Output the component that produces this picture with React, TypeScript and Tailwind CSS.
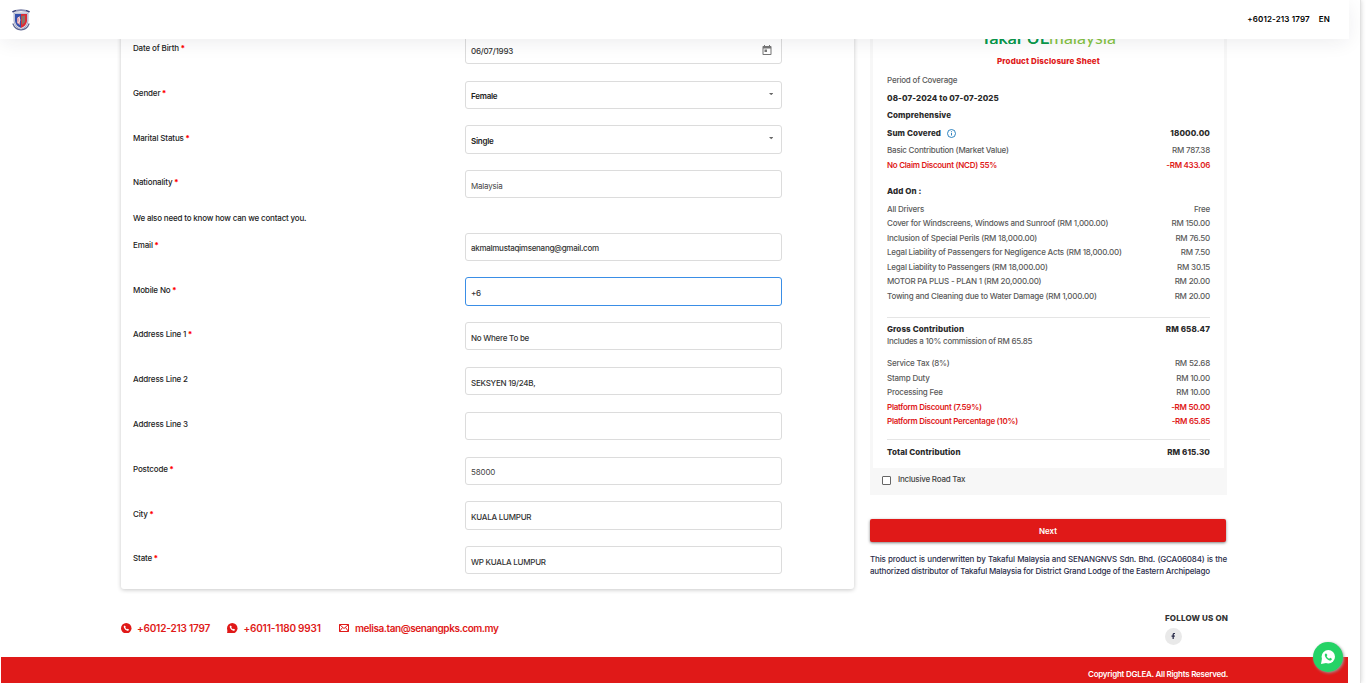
import React from "react";
import { FaFacebookF } from "react-icons/fa";

type FieldProps = { label: string; required?: boolean; value: string; tone?: string; border?: string; icon?: "date" | "select" };

function Field({ label, required, value, tone = "text-[#333] font-medium tracking-[-0.25px]", border = "border-[#dcdcdc]", icon }: FieldProps) {
  return (
    <div className="flex h-[44.8px] items-start">
      <div className="w-[332px] pt-[6.3px] text-[8px] leading-[12px] font-medium tracking-[-0.15px] text-[#222]">
        {label}
        {required && <span className="ml-[1.5px] font-extrabold text-[#f00]">*</span>}
      </div>
      <div className={`flex h-[28.2px] w-[317px] items-center justify-between rounded-[3px] border bg-white pl-[5px] pr-[8px] ${border}`}>
        <span className={`pt-[3px] text-[8px] leading-[12px] ${tone}`}>{value}</span>
        {icon === "date" && (
          <svg viewBox="0 0 24 24" className="size-[12px]" fill="#777">
            <path d="M19 4h-1V2h-2v2H8V2H6v2H5c-1.11 0-2 .9-2 2v14c0 1.1.89 2 2 2h14c1.1 0 2-.9 2-2V6c0-1.1-.9-2-2-2zm0 16H5V9h14v11zM7 11h5v5H7z" />
          </svg>
        )}
        {icon === "select" && (
          <svg viewBox="0 0 10 5" className="-mt-[2px] h-[2.2px] w-[4.4px]" fill="#666">
            <path d="M0 0h10L5 5z" />
          </svg>
        )}
      </div>
    </div>
  );
}

function Line({ l, r, h = "h-[14.5px]", tone = "font-medium tracking-[-0.21px] text-[#5a5a5a]" }: { l: string; r: string; h?: string; tone?: string }) {
  return (
    <div className={`flex items-center justify-between text-[8px] leading-[12px] ${h} ${tone}`}>
      <span>{l}</span>
      <span>{r}</span>
    </div>
  );
}

function Crest() {
  return (
    <svg viewBox="0 0 18 22" className="h-[22px] w-[18px]">
      <path d="M2 4V12Q2.5 18 9 20.5Q15.500 18 16 12V4Z" fill="#dfe1ee" stroke="#7a80a8" strokeWidth=".6" />
      <path d="M3 5H9V19Q3.500 17 3 12Z" fill="#3450ac" />
      <path d="M9 5H15V12Q14.500 17 9 19Z" fill="#dc2c36" />
      <path d="M5 9L8 7V16L5 14Z" fill="#e0a0aa" />
      <path d="M9.500 7L13 6.500L13 13L10 16Z" fill="#8c7468" />
      <path d="M6.500 8L8 11L6.500 14" stroke="#fff" strokeWidth=".8" fill="none" />
      <path d="M.5 3.200Q2 1.200 9 1.200Q16 1.200 17.500 3.200" stroke="#39417a" strokeWidth="1.600" fill="none" />
      <path d="M4 1.800H14" stroke="#c9cce0" strokeWidth=".8" fill="none" />
      <path d="M.8 14.500Q3 20.500 9 21Q15 20.500 17.200 14.500" stroke="#5a628f" strokeWidth="1.200" fill="none" />
    </svg>
  );
}

function WhatsBubble({ tail }: { tail?: boolean }) {
  return (
    <svg viewBox="0 0 24 24" className="size-[10.5px]">
      <circle cx="12" cy="12" r="12" fill="#e01918" />
      {tail && <path d="M0 24L1.500 14L10 23Z" fill="#e01918" />}
      <path d="M8.500 5.500L6.300 7.500C5.800 12.500 11.500 18.300 16.500 17.800L18.500 15.500L15.500 13L13.500 14.300C11.800 13.500 10.600 12.300 9.800 10.500L11 8.500Z" fill="#fff" />
    </svg>
  );
}

const strong = "font-extrabold tracking-[0.1px] text-[#2b2b2b]";
const discount = "font-semibold tracking-[-0.27px] text-[#e01918]";

export default function App() {
  return (
    <div className="flex h-[683px] w-[1366px] overflow-hidden bg-white font-['Inter',sans-serif]">
      <div className="flex w-[1361px] flex-col border-r border-[#e2e2e2] shadow-[0_0_5px_rgba(0,0,0,0.18)]">
        <header className="relative z-10 flex h-[39px] w-[1349px] shrink-0 items-center justify-between bg-white pl-[12px] pr-[19px] shadow-[0_4px_20px_-2px_rgba(30,30,50,0.09)]">
          <Crest />
          <div className="flex gap-[9px] pb-[2px] text-[8px] leading-[12px] font-semibold tracking-[0.14px] text-black">
            <span>+6012-213 1797</span>
            <span>EN</span>
          </div>
        </header>

        <main className="-mt-[10px] flex h-[586px] shrink-0 items-start pl-[121px]">
          <section className="h-[560px] w-[733px] rounded-[3px] bg-white pl-[12px] pt-[6.8px] shadow-[0_1px_4px_rgba(0,0,0,0.22)]">
            <Field label="Date of Birth" required value="06/07/1993" tone="font-medium tracking-[-0.2px] text-[#333]" icon="date" />
            <Field label="Gender" required value="Female" tone="font-semibold tracking-[-0.25px] text-[#222]" icon="select" />
            <Field label="Marital Status" required value="Single" tone="font-semibold tracking-[-0.25px] text-[#222]" icon="select" />
            <Field label="Nationality" required value="Malaysia" tone="font-normal tracking-[-0.2px] text-[#444]" />
            <p className="flex h-[17.6px] items-start text-[8px] leading-[12px] font-medium tracking-[-0.18px] text-[#222]">
              <span className="-mt-[2.5px]">We also need to know how can we contact you.</span>
            </p>
            <Field label="Email" required value="akmalmustaqimsenang@gmail.com" tone="font-medium tracking-[-0.28px] text-[#333]" />
            <Field label="Mobile No" required value="+6" border="border-[#3a8ee6]" />
            <Field label="Address Line 1" required value="No Where To be" />
            <Field label="Address Line 2" value="SEKSYEN 19/24B," />
            <Field label="Address Line 3" value="" />
            <Field label="Postcode" required value="58000" tone="font-normal tracking-[-0.15px] text-[#444]" />
            <Field label="City" required value="KUALA LUMPUR" />
            <Field label="State" required value="WP KUALA LUMPUR" />
          </section>

          <aside className="ml-[16px] w-[357px]">
            <div className="h-[466px] border-x-[3px] border-b-[27px] border-[#f7f7f7] bg-white px-[14px]">
              <div className="h-[26px] text-center font-['Lato',sans-serif] text-[18px] leading-[17px] text-[#0a9a4b]">
                <span className="[text-shadow:0_0_0.5px_#0a9a4b]">TakaFUL</span><span className="text-[#84c341]">malaysia</span>
              </div>
              <div className="h-[16px] text-center text-[8px] leading-[12px] font-extrabold tracking-[0.12px] text-[#e01918]">Product Disclosure Sheet</div>
              <div className="h-[18px] text-[8px] leading-[18px] font-medium tracking-[-0.2px] text-[#5a5a5a]">Period of Coverage</div>
              <div className={`h-[18px] text-[8px] leading-[18px] ${strong}`}>08-07-2024 to 07-07-2025</div>
              <div className={`h-[17px] text-[8px] leading-[17px] ${strong}`}>Comprehensive</div>
              <div className={`flex h-[18px] items-center justify-between text-[8px] ${strong}`}>
                <span className="flex items-center gap-[6px]">
                  Sum Covered
                  <svg viewBox="0 0 18 18" className="size-[9px]" fill="none" stroke="#1976b8" strokeWidth="1.8">
                    <circle cx="9" cy="9" r="8" />
                    <path d="M9 8v5M9 4.500v2" />
                  </svg>
                </span>
                <span>18000.00</span>
              </div>
              <Line l="Basic Contribution (Market Value)" r="RM 787.38" h="h-[15px]" />
              <Line l="No Claim Discount (NCD) 55%" r="-RM 433.06" h="h-[15px]" tone={discount} />
              <div className={`h-[29.5px] pt-[12.5px] text-[8px] leading-[12px] ${strong}`}>Add On :</div>
              <Line l="All Drivers" r="Free" />
              <Line l="Cover for Windscreens, Windows and Sunroof (RM 1,000.00)" r="RM 150.00" />
              <Line l="Inclusion of Special Perils (RM 18,000.00)" r="RM 76.50" />
              <Line l="Legal Liability of Passengers for Negligence Acts (RM 18,000.00)" r="RM 7.50" />
              <Line l="Legal Liability to Passengers (RM 18,000.00)" r="RM 30.15" />
              <Line l="MOTOR PA PLUS - PLAN 1 (RM 20,000.00)" r="RM 20.00" />
              <Line l="Towing and Cleaning due to Water Damage (RM 1,000.00)" r="RM 20.00" />
              <div className="mb-[5px] mt-[13.5px] border-t border-[#e5e5e5]" />
              <Line l="Gross Contribution" r="RM 658.47" h="h-[12px]" tone={strong} />
              <Line l="Includes a 10% commission of RM 65.85" r="" h="h-[12px]" tone="font-medium tracking-[-0.25px] text-[#5a5a5a]" />
              <div className="h-[9.5px]" />
              <Line l="Service Tax (8%)" r="RM 52.68" />
              <Line l="Stamp Duty" r="RM 10.00" />
              <Line l="Processing Fee" r="RM 10.00" />
              <Line l="Platform Discount (7.59%)" r="-RM 50.00" tone={discount} />
              <Line l="Platform Discount Percentage (10%)" r="-RM 65.85" tone={discount} />
              <div className="mb-[6px] mt-[10px] border-t border-[#e5e5e5]" />
              <Line l="Total Contribution" r="RM 615.30" h="h-[12px]" tone={strong} />
            </div>
            <div className="relative -mt-[27px] flex h-[27px] items-center gap-[7px] pl-[12px] text-[8px] font-medium tracking-[-0.22px] text-[#444]">
              <span className="mb-[3px] size-[9px] rounded-[1px] border border-[#666] bg-white" />
              <span className="pb-[5px]">Inclusive Road Tax</span>
            </div>
            <div className="mt-[24px] flex h-[23px] w-[356px] items-center justify-center rounded-[2px] bg-[#e01918] pt-[1px] text-[8px] font-semibold text-white shadow-[0_1px_3px_rgba(0,0,0,0.5)]">Next</div>
            <div className="mt-[11px] text-justify text-[8px] leading-[12px] font-medium tracking-[-0.175px] text-[#2b2d4a]">
              This product is underwritten by Takaful Malaysia and SENANGNVS Sdn. Bhd. (GCA06084) is the authorized distributor of Takaful Malaysia for District Grand Lodge of the Eastern Archipelago
            </div>
          </aside>
        </main>

        <div className="flex h-[42px] shrink-0 items-start pl-[121px]">
          <div className="flex items-center pt-[5px] text-[10px] leading-[16px] font-semibold tracking-[-0.2px] text-[#e01918]">
            <WhatsBubble />
            <span className="ml-[5.5px] w-[90px]">+6012-213 1797</span>
            <WhatsBubble tail />
            <span className="ml-[6px] w-[95.5px]">+6011-1180 9931</span>
            <svg viewBox="0 0 20 16" className="h-[8px] w-[10px]" fill="none" stroke="#e01918" strokeWidth="2">
              <path d="M1 1h18v14H1zM1 1l9 8 9-8M1 15l6-8M19 15l-6-8" />
            </svg>
            <span className="ml-[6px] tracking-[-0.43px]">melisa.tan@senangpks.com.my</span>
          </div>
          <div className="-mt-[3px] ml-auto mr-[130px] w-[65px]">
            <div className="text-[8px] leading-[12px] font-extrabold tracking-[0.18px] whitespace-nowrap text-[#333]">FOLLOW US ON</div>
            <div className="mt-[3.5px] flex size-[17px] items-center justify-center rounded-full bg-[#e9e9e9]">
              <FaFacebookF className="size-[6.5px] text-[#2b2d4a]" />
            </div>
          </div>
        </div>

        <footer className="relative ml-px h-[26px] w-[1347px] shrink-0 bg-[#e01918] pr-[120px] pt-[11px] text-right text-[8px] leading-[12px] font-semibold tracking-[-0.25px] text-white">
          Copyright DGLEA. All Rights Reserved.
          <div className="absolute -top-[15px] left-[1312px] flex size-[30px] items-center justify-center rounded-full bg-[#25d366] shadow-[1px_1px_3px_#999]">
            <svg viewBox="0 0 24 24" className="size-[14px]">
              <circle cx="12.5" cy="11.5" r="11.5" fill="#fff" />
              <path d="M0 24L2 13L11 22Z" fill="#fff" />
              <path d="M8.500 5.500L6.500 7.500C6 12.500 12 18.500 17 17.800L19 15.500L15.800 13.300L14 14.800C12 14 10.500 12.500 9.700 10.500L11 8.500Z" fill="#25d366" />
            </svg>
          </div>
        </footer>
      </div>
    </div>
  );
}
